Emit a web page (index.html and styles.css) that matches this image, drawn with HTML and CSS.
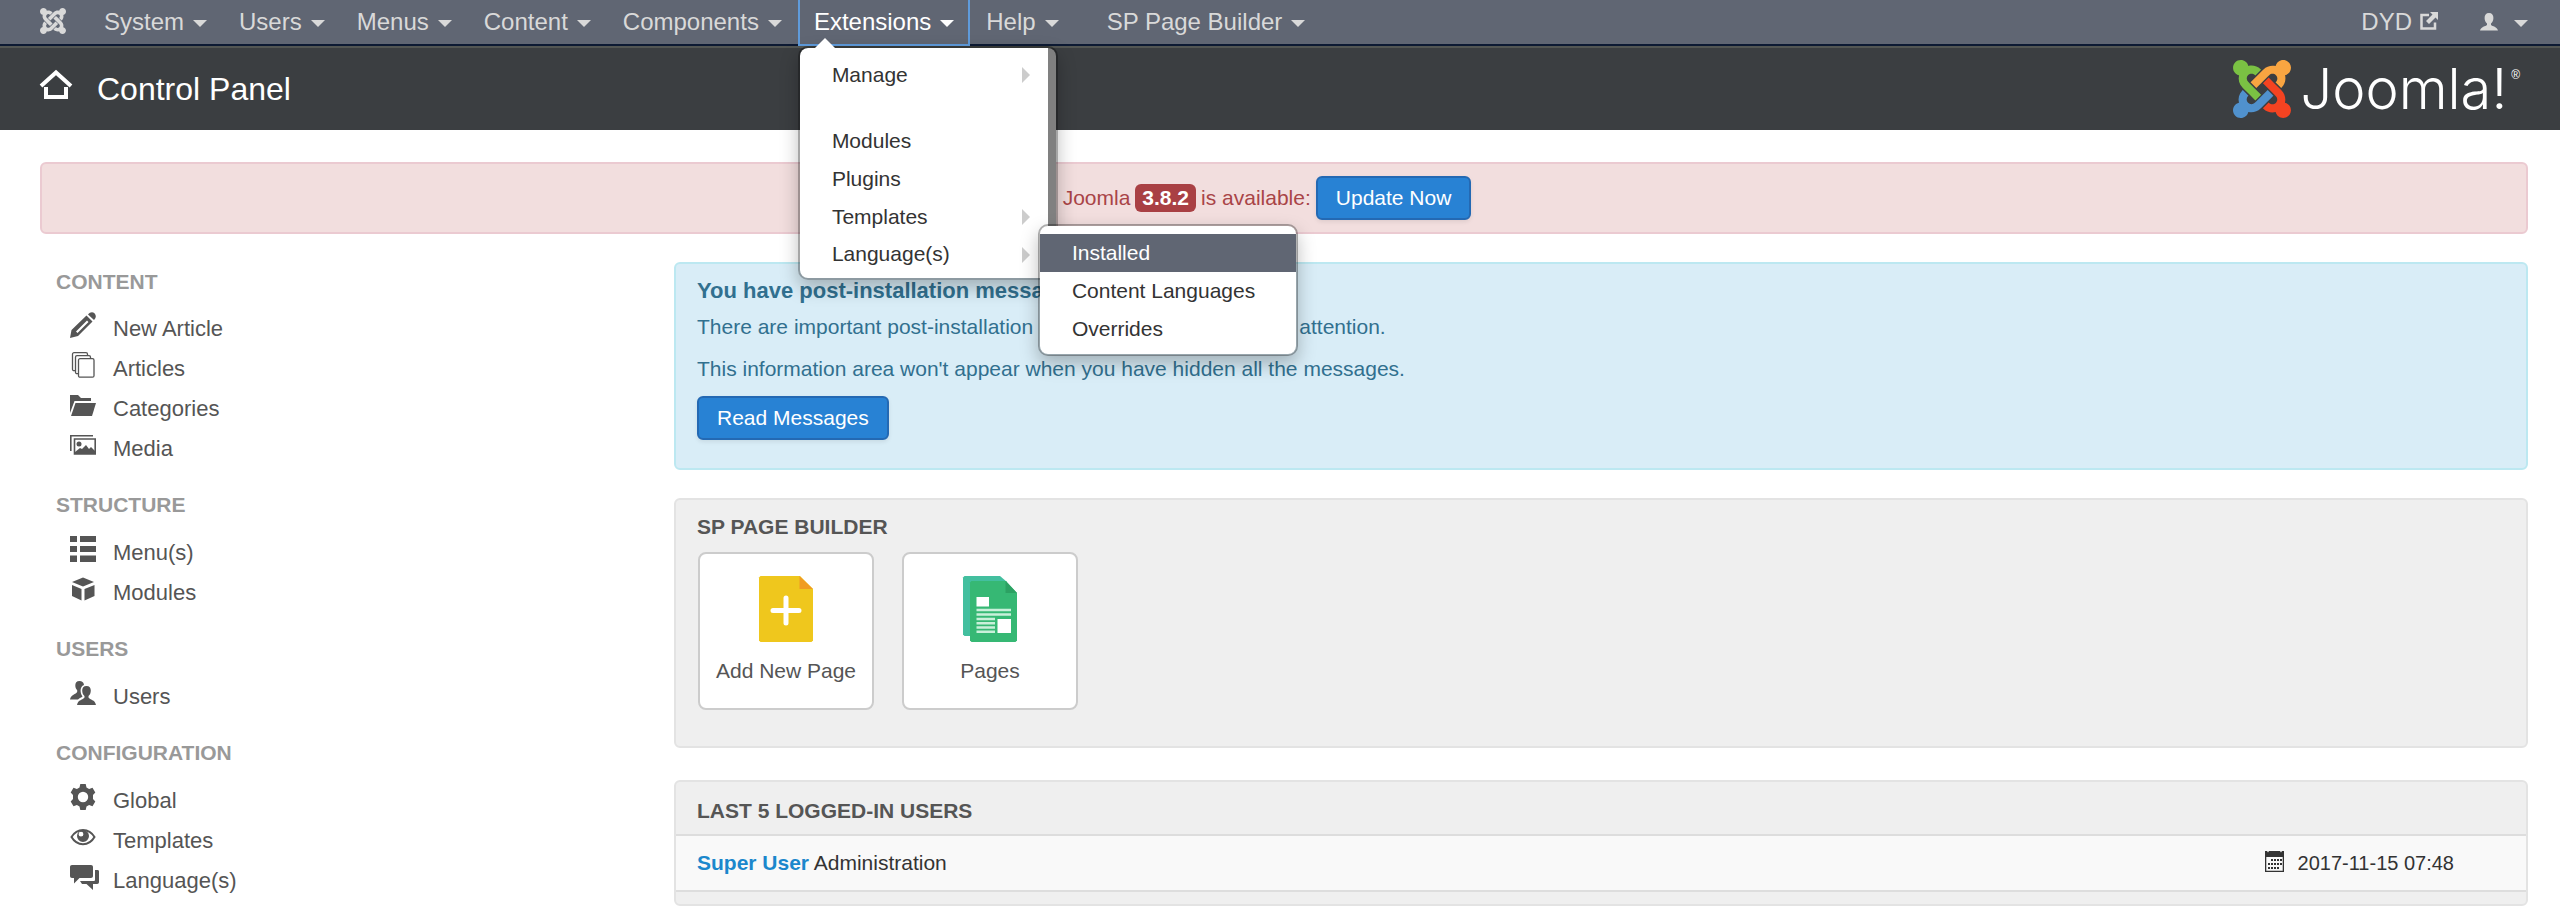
FILE: index.html
```html
<!DOCTYPE html>
<html lang="en">
<head>
<meta charset="utf-8">
<title>Control Panel</title>
<link rel="stylesheet" href="styles.css">
</head>
<body>
<svg class="defs" aria-hidden="true">
  <symbol id="arm" viewBox="0 0 24 24"><path d="M16.719 14.759L14.22 17.26l-2.37 2.37-.462.466c-1.368 1.365-3.297 1.83-5.047 1.397-.327 1.424-1.604 2.49-3.13 2.49C1.438 23.983 0 22.547 0 20.772c0-1.518 1.055-2.789 2.469-3.123-.446-1.76.016-3.705 1.396-5.08l.179-.18 2.37 2.37-.184.181c-.769.779-.769 2.024 0 2.789.771.78 2.022.78 2.787 0l.465-.465 2.367-2.371 2.502-2.506z"/></symbol>
</svg>

<nav class="navbar">
  <a class="nav-home" href="#" aria-label="Home">
    <svg class="mark" viewBox="0 0 24 24"><use href="#arm" width="24" height="24"/><use href="#arm" width="24" height="24" transform="rotate(90 12 12)"/><use href="#arm" width="24" height="24" transform="rotate(180 12 12)"/><use href="#arm" width="24" height="24" transform="rotate(270 12 12)"/></svg>
  </a>
  <ul class="nav-list">
    <li><a class="nav-link" href="#">System<span class="caret"></span></a></li>
    <li><a class="nav-link" href="#">Users<span class="caret"></span></a></li>
    <li><a class="nav-link" href="#">Menus<span class="caret"></span></a></li>
    <li><a class="nav-link" href="#">Content<span class="caret"></span></a></li>
    <li><a class="nav-link" href="#">Components<span class="caret"></span></a></li>
    <li class="open">
      <a class="nav-link" href="#">Extensions<span class="caret"></span></a>
      <div class="dropdown">
        <ul class="menu">
          <li class="has-sub"><a href="#">Manage</a></li>
          <li class="divider"></li>
          <li><a href="#">Modules</a></li>
          <li><a href="#">Plugins</a></li>
          <li class="has-sub"><a href="#">Templates</a></li>
          <li class="has-sub"><a href="#">Language(s)</a>
            <ul class="menu submenu">
              <li><a class="selected" href="#">Installed</a></li>
              <li><a href="#">Content Languages</a></li>
              <li><a href="#">Overrides</a></li>
            </ul>
          </li>
        </ul>
      </div>
    </li>
    <li><a class="nav-link" href="#">Help<span class="caret"></span></a></li>
    <li class="extra"><a class="nav-link" href="#">SP Page Builder<span class="caret"></span></a></li>
  </ul>
  <div class="nav-right">
    <a class="site-link" href="#">DYD
      <svg class="icon-out" viewBox="0 0 18 18"><path d="M9 3H1.500V16.500H15V10.500" fill="none" stroke="currentColor" stroke-width="2.500"/><path d="M10 0h8v8l-2.500-2.500L9 12 6 9l6.500-6.500z"/></svg>
    </a>
    <a class="user-link" href="#" aria-label="User menu">
      <svg class="icon-user" viewBox="0 0 18 18"><path d="M9 0C6 0 4.500 2 4.600 5c0 2.500 1 4.500 2.400 5.600V12C5.500 13.500 1 13.500 0 17.500h18c-1-4-5.500-4-7-5.500v-1.400C12.400 9.500 13.400 7.500 13.400 5 13.500 2 12 0 9 0z"/></svg>
      <span class="caret"></span>
    </a>
  </div>
</nav>

<header class="header">
  <h1 class="page-title">
    <svg class="icon-home" viewBox="0 0 32 30"><path d="M1 16L16 2.500 31 16" fill="none" stroke="currentColor" stroke-width="4"/><path d="M6 17V27H26V17" fill="none" stroke="currentColor" stroke-width="4"/></svg>
    Control Panel
  </h1>
  <a class="logo" href="#">
    <svg class="emblem" viewBox="0 0 24 24"><use class="blue" href="#arm" width="24" height="24"/><use class="green" href="#arm" width="24" height="24" transform="rotate(90 12 12)"/><use class="orange" href="#arm" width="24" height="24" transform="rotate(180 12 12)"/><use class="red" href="#arm" width="24" height="24" transform="rotate(270 12 12)"/></svg>
    <span class="wordmark">Joomla!</span><span class="reg">®</span>
  </a>
</header>

<main class="page">
  <div class="alert-update">
    Joomla <span class="badge">3.8.2</span> is available:
    <button class="btn" type="button">Update Now</button>
  </div>

  <div class="columns">
    <aside class="sidebar">
      <h2>Content</h2>
      <ul>
        <li><a href="#"><svg viewBox="0 0 26 26"><path fill-rule="evenodd" d="M0 26l1.500-8L16.500 3.500l6 6L8 24zM6 19.500l1.500 1.500L18.500 10 17 8.500z"/><path d="M18 2.500C20 0 22.500-.5 24.500 1.300 26.500 3.500 26.200 6 24 8z"/></svg>New Article</a></li>
        <li><a href="#"><svg viewBox="0 0 26 26"><g fill="#fff" stroke="currentColor" stroke-width="1.300"><rect x="2.500" y=".7" width="15" height="18" rx="1.500"/><rect x="5.500" y="3.700" width="15" height="18" rx="1.500"/><rect x="8.500" y="6.700" width="15.500" height="18.500" rx="1.500"/></g></svg>Articles</a></li>
        <li><a href="#"><svg viewBox="0 0 26 26"><path d="M0 3h8l3 3h10v3H4.500L0 21z"/><path d="M5.500 11H26l-4 13H1z"/></svg>Categories</a></li>
        <li><a href="#"><svg viewBox="0 0 26 26"><path d="M.8 19V3.800H23" fill="none" stroke="currentColor" stroke-width="1.600"/><path d="M4.500 7h20.700v15H4.500z" fill="none" stroke="currentColor" stroke-width="1.600"/><circle cx="9" cy="12" r="2.500"/><path d="M5 22v-2l5-4 2 1 4-4 3 4 2-2 4 4v3z"/></svg>Media</a></li>
      </ul>
      <h2>Structure</h2>
      <ul>
        <li><a href="#"><svg viewBox="0 0 26 26"><path d="M0 0h7v6H0zM10 0h16v6H10zM0 10h7v6H0zM10 10h16v6H10zM0 19.500h7v6.500H0zM10 19.500h16v6.500H10z"/></svg>Menu(s)</a></li>
        <li><a href="#"><svg viewBox="0 0 26 26"><path d="M13 1.500L24 6 13 10.500 2 6zM2 9l9.500 4v11.500L2 20zM24.500 9l-10 4v11.500l10-4.500z"/></svg>Modules</a></li>
      </ul>
      <h2>Users</h2>
      <ul>
        <li><a href="#"><svg viewBox="0 0 26 26"><path d="M9.500 1C6.500 1 5.200 3 5.300 5.500c0 2.300.8 3.700 1.900 4.700v1.600C6 14.500 1 14.500 0 19.500h8c1.500-1.500 3.500-2 4.500-3C10 13 9.500 6.500 14 5 13.500 2 12 1 9.500 1z"/><path d="M16.500 6c-3 0-4.300 2-4.300 4.500 0 2.700 1 4.500 2.300 5.500v1.500C13 20 8 19.500 7 25h19c-1-5.500-6-5-7.500-7.500V16c1.300-1 2.300-2.800 2.300-5.500 0-2.500-1.300-4.500-4.300-4.500z"/></svg>Users</a></li>
      </ul>
      <h2>Configuration</h2>
      <ul>
        <li><a href="#"><svg viewBox="0 0 26 26"><path fill-rule="evenodd" d="M10.300 0h5.400l.8 3.500 2.600 1.500 3.400-1.200L25.300 8.500 23 11v4l2.300 2.500-2.800 4.700-3.400-1.200-2.600 1.500-.8 3.500h-5.400l-.8-3.500L6.900 21l-3.400 1.200L.7 17.500 3 15v-4L.7 8.500l2.800-4.700L6.900 5l2.600-1.500zM13 7.800a5.200 5.200 0 1 0 0 10.400 5.200 5.200 0 0 0 0-10.400z"/></svg>Global</a></li>
        <li><a href="#"><svg viewBox="0 0 26 26"><path d="M1.500 13C7 3.500 19 3.500 24.500 13 19 22.500 7 22.500 1.500 13z" fill="none" stroke="currentColor" stroke-width="2"/><path fill-rule="evenodd" d="M13 6a6 6 0 1 0 0 12 6 6 0 0 0 0-12zM11 7.800a2.400 2.400 0 1 1 0 4.800 2.400 2.400 0 0 1 0-4.800z"/></svg>Templates</a></li>
        <li><a href="#"><svg viewBox="0 0 26 26"><path d="M2 1h19c1.200 0 2 .8 2 2v9c0 1.200-.8 2-2 2H9.500L4 19.500V14H2c-1.200 0-2-.8-2-2V3c0-1.200.8-2 2-2z"/><path d="M25 6h2.500c1 0 1.500.7 1.500 1.500V18c0 1.200-.7 2-1.800 2H23v6l-6.500-6H12l-2-3h13.500c1 0 1.500-.5 1.500-1.500z"/></svg>Language(s)</a></li>
      </ul>
    </aside>

    <div class="content">
      <section class="notice">
        <h2>You have post-installation messages</h2>
        <p>There are important post-installation messages that require your attention.</p>
        <p>This information area won't appear when you have hidden all the messages.</p>
        <button class="btn" type="button">Read Messages</button>
      </section>

      <section class="panel builder">
        <h2>SP Page Builder</h2>
        <div class="cards">
          <a class="card" href="#">
            <svg viewBox="0 0 54 66"><path fill="#efc71d" d="M1.500 0H41l13 13v51.500L52.500 66h-51L0 64.500v-63z"/><path fill="#f09c23" d="M40.500 0L54 13H40.500z"/><path d="M27 22V47M14 34.500H40" stroke="#fff" stroke-width="5" stroke-linecap="round"/></svg>
            Add New Page
          </a>
          <a class="card" href="#">
            <svg viewBox="0 0 54 66"><path fill="#43bf9f" d="M1.500 0H37l7 6v54H1.500L0 58.500v-57z"/><path fill="#36b874" d="M8.500 5H43l11 12v47.500L52.500 66h-44L7 64.500v-58z"/><path fill="#2ca163" d="M42.500 5L54 17H42.500z"/><path fill="#fff" d="M13.500 21H26v9.500H13.500zM34.500 43H48v14H34.500z"/><path stroke="#c9f0da" stroke-width="2.500" d="M13.500 34H48M13.500 38.500H48M13.500 43H32M13.500 47.300H32M13.500 51.500H32M13.500 55.800H32"/></svg>
            Pages
          </a>
        </div>
      </section>

      <section class="panel logins">
        <h2>Last 5 Logged-in Users</h2>
        <div class="login-row">
          <div><a href="#">Super User</a> Administration</div>
          <div class="when">
            <svg viewBox="0 0 19 21"><path fill-rule="evenodd" d="M0 0h2l1 1.500L4 0h11l1 1.500L17 0h2v21H0zM1.300 6v13.700h16.400V6z"/><path d="M6 8h2v2H6zM9 8h2v2H9zM12 8h2v2h-2zM15 8h2v2h-2zM3 12h2v2H3zM6 12h2v2H6zM9 12h2v2H9zM12 12h2v2h-2zM15 12h2v2h-2zM3 16h2v2H3zM6 16h2v2H6zM9 16h2v2H9zM12 16h2v2h-2z"/></svg>
            <time datetime="2017-11-15T07:48">2017-11-15 07:48</time>
          </div>
        </div>
      </section>
    </div>
  </div>
</main>
</body>
</html>
```

FILE: styles.css
```css
* { box-sizing: border-box; }
body {
  margin: 0;
  background: #fff;
  color: #333;
  font: 21px/36px "Liberation Sans", Arial, sans-serif;
}
ul { list-style: none; margin: 0; padding: 0; }
h1, h2, p { margin: 0; }
a { color: inherit; text-decoration: none; }
svg { fill: currentColor; flex: none; overflow: visible; }
.defs { position: absolute; width: 0; height: 0; }

/* Top navigation */
.navbar {
  display: flex;
  align-items: flex-start;
  height: 46px;
  padding: 0 32px 0 40px;
  background: #606673;
  border-bottom: 2px solid #0d1a33;
  color: #d9d9d9;
  font-size: 24px;
  line-height: 44px;
}
.nav-home { display: flex; align-items: center; height: 42px; margin-right: 22px; }
.mark { width: 26px; height: 26px; }
.nav-list { display: flex; flex: 1; }
.nav-link { display: flex; align-items: center; gap: 9px; height: 44px; padding: 0 16px; }
.caret { border: 7px solid transparent; border-top-color: currentColor; border-bottom: 0; margin-top: 2px; }
.extra { margin-left: 16px; }
.open { position: relative; color: #fff; }
.open > .nav-link { height: 46px; padding: 0 14px; border: solid #5f9bdb; border-width: 0 2px 2px; }
.nav-right { display: flex; gap: 42px; }
.site-link, .user-link { display: flex; align-items: center; height: 44px; gap: 8px; }
.user-link { gap: 16px; }
.icon-out { width: 18px; height: 18px; margin-bottom: 2px; }
.icon-user { width: 18px; height: 18px; }

/* Menus */
.dropdown {
  position: absolute;
  z-index: 2;
  top: 46px;
  left: 0;
  width: 260px;
  padding-right: 8px;
  border: 2px solid rgba(0, 0, 0, .35);
  border-radius: 10px;
  background: linear-gradient(to left, #808080 8px, #fff 8px) padding-box;
  box-shadow: 0 8px 18px rgba(0, 0, 0, .25);
  color: #333;
  font-size: 21px;
}
.dropdown::before {
  content: "";
  position: absolute;
  top: -10px;
  left: 15px;
  border: 10px solid transparent;
  border-top: 0;
  border-bottom-color: #fff;
}
.menu { padding: 8px 0 6px; line-height: 38px; }
.menu li { position: relative; }
.menu a { display: block; padding: 0 32px; }
.divider { height: 28px; }
.dropdown > .menu > li:last-child { line-height: 36px; }
.has-sub::after {
  content: "";
  position: absolute;
  top: 11px;
  right: 18px;
  border: 8px solid transparent;
  border-left-color: #ccc;
  border-right: 0;
}
.submenu {
  position: absolute;
  z-index: 3;
  top: -12px;
  left: 238px;
  width: 260px;
  border: 2px solid rgba(0, 0, 0, .3);
  border-radius: 10px;
  background: #fff padding-box;
  box-shadow: 0 8px 18px rgba(0, 0, 0, .25);
  line-height: 38px;
}
.menu .selected { background: #606673; color: #fff; }

/* Page header */
.header {
  display: flex;
  justify-content: space-between;
  align-items: center;
  height: 84px;
  padding: 0 40px;
  border-top: 2px solid #535653;
  background: #3b3e41;
  color: #fff;
}
.page-title { display: flex; align-items: center; gap: 25px; font-size: 32px; font-weight: 400; }
.icon-home { width: 32px; height: 30px; margin-bottom: 8px; }
.logo { display: flex; align-items: center; }
.emblem { width: 58px; height: 58px; margin-right: 10px; }
.blue { fill: #5091cd; }
.green { fill: #7ac143; }
.orange { fill: #f9a541; }
.red { fill: #f44321; }
.wordmark { font: 300 56px/58px Inter, sans-serif; }
.reg { align-self: flex-start; font-size: 12px; line-height: 30px; margin-left: 4px; }

/* Page body */
.page { padding: 32px 32px 6px 40px; }
.alert-update {
  display: flex;
  justify-content: center;
  align-items: center;
  gap: 5px;
  height: 72px;
  padding: 0 62px 0 28px;
  border: 2px solid #ebcad1;
  border-radius: 6px;
  background: #f2dede;
  color: #a94447;
}
.badge { padding: 0 7px; border-radius: 6px; background: #a94044; color: #fff; font-weight: 700; line-height: 28px; }
.btn {
  height: 44px;
  padding: 0 18px;
  border: 2px solid #2469b3;
  border-radius: 6px;
  background: #2882d4;
  box-shadow: 0 2px 4px rgba(0, 0, 0, .08);
  color: #fff;
  font: inherit;
  line-height: 40px;
}
.columns { display: grid; grid-template-columns: 582fr 1854fr; gap: 52px; margin-top: 28px; }

.sidebar { padding: 2px 0 0 16px; color: #555; }
.sidebar h2 { margin: 18px 0 10px; color: #999; font-size: 21px; text-transform: uppercase; }
.sidebar h2:first-child { margin: 0 0 9px; }
.sidebar a { display: flex; align-items: center; gap: 17px; height: 40px; padding-left: 14px; font-size: 22px; }
.sidebar svg { width: 26px; height: 26px; margin-bottom: 8px; }

.content { min-width: 0; }
.notice {
  padding: 9px 21px 28px;
  border: 2px solid #bce8f1;
  border-radius: 6px;
  background: #d9edf7;
  color: #31708f;
}
.notice h2 { font-size: 22px; }
.notice p { margin-bottom: 6px; }
.notice .btn { display: block; margin-top: 9px; }

.panel { border: 2px solid #e3e3e3; border-radius: 6px; background: #efefef; }
.panel h2 { padding: 9px 21px 7px; color: #555; font-size: 21px; text-transform: uppercase; }
.builder { margin-top: 28px; padding-bottom: 36px; }
.cards { display: flex; gap: 28px; padding: 0 22px; }
.card {
  display: flex;
  flex-direction: column;
  align-items: center;
  gap: 11px;
  width: 176px;
  height: 158px;
  padding-top: 22px;
  border: 2px solid #ccc;
  border-radius: 8px;
  background: #fff;
  color: #555;
}
.card svg { width: 54px; height: 66px; }
.logins { margin-top: 32px; padding-bottom: 12px; }
.logins h2 { padding: 11px 21px 5px; }
.login-row {
  display: flex;
  justify-content: space-between;
  padding: 9px 72px 9px 21px;
  border: solid #ddd;
  border-width: 2px 0;
  background: #f9f9f9;
}
.login-row a { color: #1b87cc; font-weight: 700; }
.when { display: flex; align-items: center; gap: 14px; font-size: 20px; }
.when svg { width: 19px; height: 21px; margin-bottom: 4px; }
```
